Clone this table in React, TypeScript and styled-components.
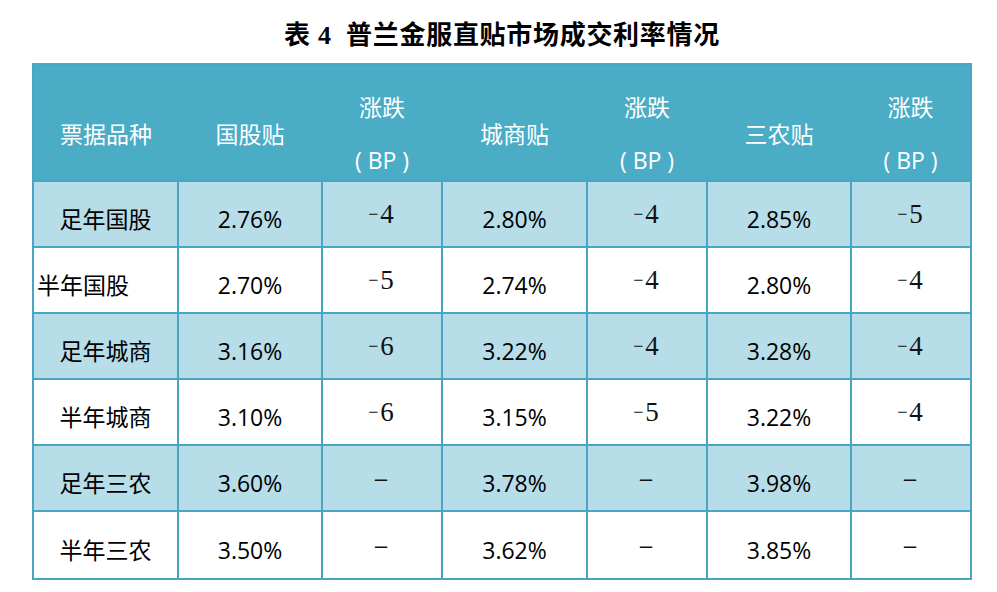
import React from 'react';
import styled, { createGlobalStyle } from 'styled-components';

const GlobalStyle = createGlobalStyle`
  body {
    margin: 0;
    background: #ffffff;
  }
`;

const Page = styled.div`
  width: 940px;
  padding: 14px 0 0 32px;
`;

const Title = styled.h1`
  margin: 0 0 5px;
  height: 44px;
  line-height: 44px;
  text-align: center;
  white-space: pre;
  font-family: "Liberation Serif", "Noto Sans CJK SC", serif;
  font-size: 26px;
  font-weight: 700;
  letter-spacing: 0.7px;
  color: #000;
`;

const Table = styled.table`
  width: 940px;
  table-layout: fixed;
  border-collapse: collapse;
  border: 2px solid #4aa5c3;
  font-family: "Open Sans", "Noto Sans CJK SC", sans-serif;
  font-size: 23px;
  color: #000;
`;

const HeadRow = styled.tr`
  height: 117px;
`;

const HeadCell = styled.th`
  padding: 22px 0 0;
  background: #4bacc6;
  color: #ffffff;
  font-weight: 400;
  line-height: 30px;
  text-align: center;
  vertical-align: middle;
`;

const HeadLine = styled.span`
  display: block;
  & + & {
    margin-top: 23px;
  }
`;

const Row = styled.tr<{ $shade: boolean; $tall?: boolean }>`
  height: ${({ $tall }) => ($tall ? 68 : 66)}px;
  background: ${({ $shade }) => ($shade ? '#b7dde8' : '#ffffff')};
`;

const Cell = styled.td<{ $left?: boolean }>`
  border: 2px solid #4aa5c3;
  padding: 10px 0 0 ${({ $left }) => ($left ? '3px' : '0')};
  text-align: ${({ $left }) => ($left ? 'left' : 'center')};
  vertical-align: middle;
  line-height: 30px;
`;

const ChangeCell = styled.td`
  border: 2px solid #4aa5c3;
  padding: 0 2px 0 0;
  text-align: center;
  vertical-align: middle;
  font-family: "Liberation Serif", serif;
  font-size: 27px;
  line-height: 30px;
  color: #111;
`;

const Minus = styled.span`
  font-size: 18px;
  margin-right: 2px;
  vertical-align: 3px;
`;

const Dash = styled.span`
  font-size: 24px;
  font-weight: 700;
  vertical-align: 2px;
`;

const widths = [145, 144, 120, 145, 120, 144, 120];

type Line = {
  name: string;
  left?: boolean;
  rates: [string, string, string];
  changes: [string, string, string];
};

const rows: Line[] = [
  { name: '足年国股', rates: ['2.76%', '2.80%', '2.85%'], changes: ['4', '4', '5'] },
  { name: '半年国股', left: true, rates: ['2.70%', '2.74%', '2.80%'], changes: ['5', '4', '4'] },
  { name: '足年城商', rates: ['3.16%', '3.22%', '3.28%'], changes: ['6', '4', '4'] },
  { name: '半年城商', rates: ['3.10%', '3.15%', '3.22%'], changes: ['6', '5', '4'] },
  { name: '足年三农', rates: ['3.60%', '3.78%', '3.98%'], changes: ['', '', ''] },
  { name: '半年三农', rates: ['3.50%', '3.62%', '3.85%'], changes: ['', '', ''] },
];

const Change: React.FC<{ value: string }> = ({ value }) =>
  value ? (
    <ChangeCell>
      <Minus>−</Minus>
      {value}
    </ChangeCell>
  ) : (
    <ChangeCell>
      <Dash>–</Dash>
    </ChangeCell>
  );

const Head: React.FC<{ lines: string[] }> = ({ lines }) => (
  <HeadCell>
    {lines.map((l) => (
      <HeadLine key={l}>{l}</HeadLine>
    ))}
  </HeadCell>
);

const App: React.FC = () => {
  return (
    <Page>
      <GlobalStyle />
      <Title>{'表 4  普兰金服直贴市场成交利率情况'}</Title>
      <Table>
        <colgroup>
          {widths.map((w, i) => (
            <col key={i} style={{ width: w }} />
          ))}
        </colgroup>
        <thead>
          <HeadRow>
            <Head lines={['票据品种']} />
            <Head lines={['国股贴']} />
            <Head lines={['涨跌', '( BP )']} />
            <Head lines={['城商贴']} />
            <Head lines={['涨跌', '( BP )']} />
            <Head lines={['三农贴']} />
            <Head lines={['涨跌', '( BP )']} />
          </HeadRow>
        </thead>
        <tbody>
          {rows.map((r, i) => (
            <Row key={r.name} $shade={i % 2 === 0} $tall={i === rows.length - 1}>
              <Cell $left={r.left}>{r.name}</Cell>
              <Cell>{r.rates[0]}</Cell>
              <Change value={r.changes[0]} />
              <Cell>{r.rates[1]}</Cell>
              <Change value={r.changes[1]} />
              <Cell>{r.rates[2]}</Cell>
              <Change value={r.changes[2]} />
            </Row>
          ))}
        </tbody>
      </Table>
    </Page>
  );
};

export default App;
